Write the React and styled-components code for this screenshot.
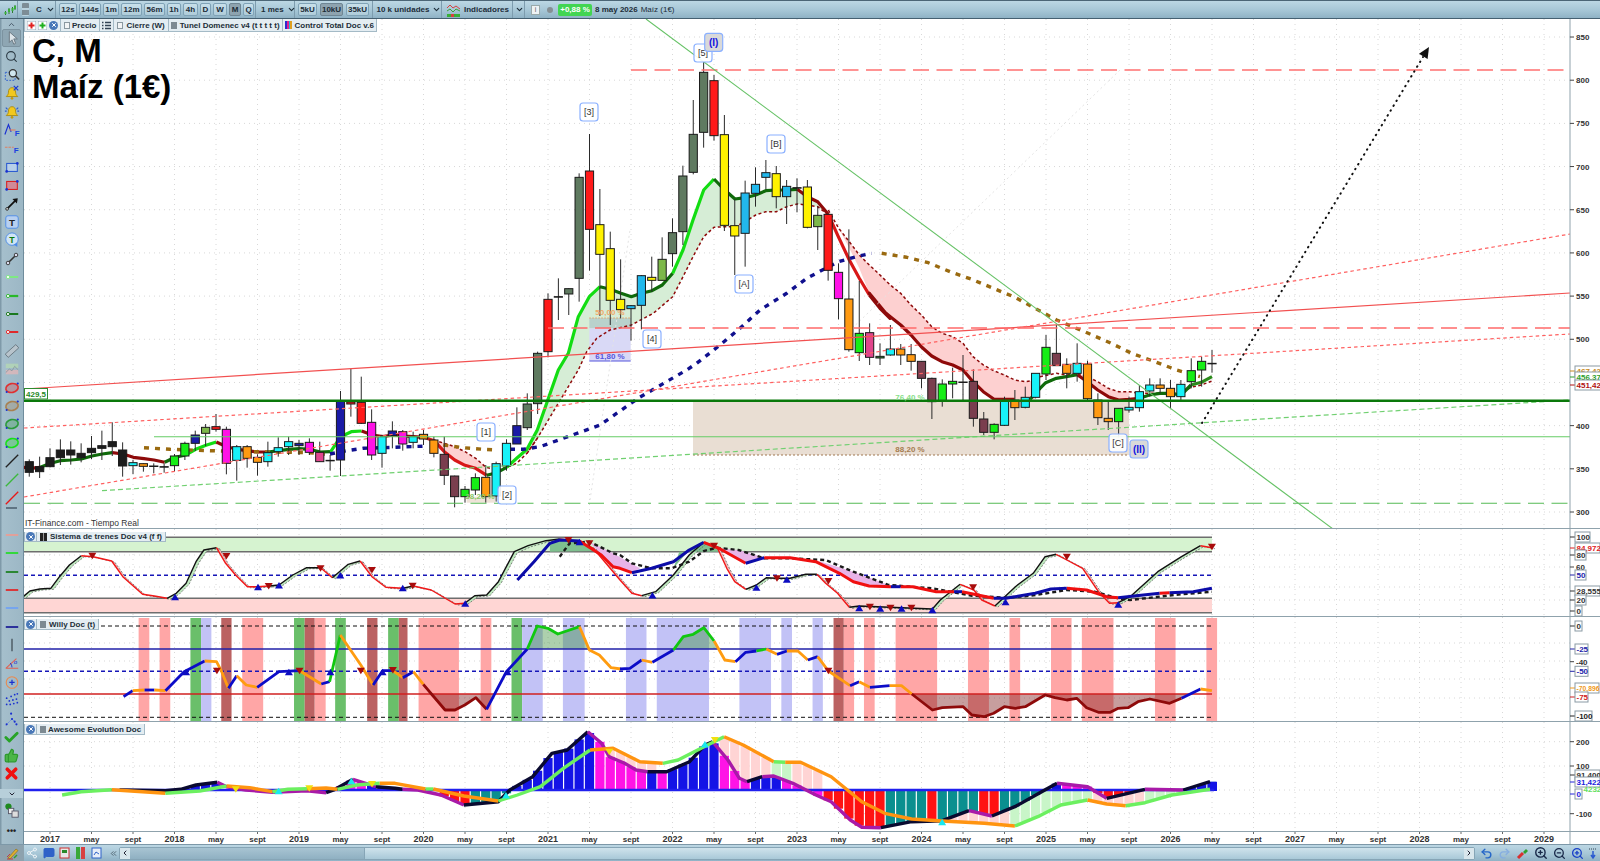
import React from 'react';
import styled, { createGlobalStyle } from 'styled-components';
import { Search, ZoomIn, ZoomOut, Undo2, Redo2, Share2, MessageSquare, ThumbsUp, Check, X, ChevronDown, ChevronUp, ChevronLeft, ChevronRight, ChevronsLeft } from 'lucide-react';

const GlobalStyle = createGlobalStyle`
  html, body { margin: 0; padding: 0; background: #fff; }
  body { font-family: "Liberation Sans", Arial, sans-serif; overflow: hidden; }
`;

const BAR_BG = 'linear-gradient(#bcd7e4, #a6c6d6 55%, #8fb2c5)';

const Page = styled.div`
  width: 1600px;
  height: 861px;
  display: flex;
  flex-direction: column;
  overflow: hidden;
  color: #1c2c38;
`;

/* ---- top toolbar ---- */
const TopBar = styled.div`
  height: 19px;
  flex: none;
  box-sizing: border-box;
  display: flex;
  background: ${BAR_BG};
  border-top: 1px solid #4c6676;
  border-bottom: 1px solid #456071;
`;
const Section = styled.div`
  width: ${(p) => p.$w}px;
  flex: none;
  box-sizing: border-box;
  display: flex;
  align-items: center;
  gap: ${(p) => p.$gap || 0}px;
  padding-left: ${(p) => p.$pad || 0}px;
  border-right: 1px solid #7d9cae;
`;
const Tail = styled(Section)`
  border: 0;
  width: auto;
`;
const BarButton = styled.div`
  width: ${(p) => p.$w}px;
  height: 13px;
  flex: none;
  box-sizing: border-box;
  display: flex;
  align-items: center;
  justify-content: center;
  font-size: 8px;
  font-weight: bold;
  border: 1px solid ${(p) => (p.$on ? '#6f8694' : '#7fa2b6')};
  border-radius: 2px;
  background: ${(p) => (p.$on ? '#8ea3af' : 'linear-gradient(#c9e0ea, #aecbd9)')};
`;
const BarText = styled.span`
  font-size: 8px;
  font-weight: ${(p) => (p.$light ? 'normal' : 'bold')};
  margin-left: ${(p) => p.$ml || 0}px;
  white-space: nowrap;
`;
const BarChevron = styled(ChevronDown)`
  margin-left: ${(p) => p.$ml || 0}px;
  flex: none;
`;
const Badge = styled.span`
  width: 34px;
  height: 12px;
  display: flex;
  align-items: center;
  justify-content: center;
  font-size: 8px;
  font-weight: bold;
  color: #fff;
  background: #42d552;
  border-radius: 2px;
`;
const InfoBox = styled.span`
  width: 7px;
  height: 8px;
  display: flex;
  align-items: center;
  justify-content: center;
  font-size: 7px;
  background: #eef3f5;
  color: #555;
  border: 1px solid #9aa;
  margin: 0 0 0 6px;
`;
const GrayDot = styled.span`
  width: 6px;
  height: 6px;
  border-radius: 50%;
  background: #858f94;
  margin: 0 5px 0 7px;
`;
const Grip = styled.div`
  width: 7px;
  height: 13px;
  margin: 0 7px 0 4px;
  background: repeating-linear-gradient(#7d8d96 0 5px, #b9d2de 5px 7px);
  border-radius: 1px;
`;

/* ---- left tool column ---- */
const Main = styled.div`
  height: 825px;
  flex: none;
  display: flex;
`;
const Sidebar = styled.div`
  width: 24px;
  flex: none;
  box-sizing: border-box;
  display: flex;
  flex-direction: column;
  align-items: stretch;
  background: linear-gradient(90deg, #7f9aa9 0 1px, #a5bfcc 2px, #9db8c6 21px);
  border-right: 1px solid #6f8c9c;
`;
const SideTop = styled.div`
  height: 10px;
  flex: none;
  display: flex;
  align-items: center;
  justify-content: center;
  color: #456;
`;
const ToolCell = styled.div`
  height: 18.4px;
  flex: none;
  display: flex;
  align-items: center;
  justify-content: center;
  box-sizing: border-box;
  ${(p) => p.$on && 'background: #8ea6b3; border: 1px solid #7c93a0; border-radius: 2px; margin: 0 2px;'}
`;
const SideGrip = styled.div`
  height: 2px;
  flex: none;
  margin: 0 6px 16.4px;
  background: #5f7483;
`;
const SideFooter = styled.div`
  margin-top: auto;
  display: flex;
  flex-direction: column;
`;
const SideFold = styled.div`
  height: 9px;
  display: flex;
  align-items: center;
  justify-content: center;
  background: #b7cfda;
  color: #223;
`;
const SideBottom = styled.div`
  height: 46px;
  display: flex;
  flex-direction: column;
  align-items: center;
  justify-content: space-around;
  padding-bottom: 4px;
  box-sizing: border-box;
`;
const SideDots = styled.div`
  font-size: 9px;
  line-height: 7px;
  font-weight: bold;
  color: #222;
`;

/* ---- chart ---- */
const ChartColumn = styled.div`
  position: relative;
  flex: 1;
  display: flex;
  flex-direction: column;
`;
const Pane = styled.div`
  position: relative;
  height: ${(p) => p.$h}px;
  flex: none;
  box-sizing: border-box;
  overflow: hidden;
  border-bottom: 1.5px solid #8fa2ac;
`;
const PlotSvg = styled.svg`
  display: block;
  width: 1576px;
  height: ${(p) => p.$h}px;
`;
const Title = styled.div`
  position: absolute;
  left: 8px;
  top: 14px;
  font-size: 33px;
  line-height: 36px;
  font-weight: bold;
  color: #000;
`;
const Source = styled.div`
  position: absolute;
  left: 1px;
  bottom: 0;
  font-size: 8.5px;
  line-height: 10px;
  color: #333;
`;
const LegendBar = styled.div`
  position: absolute;
  left: 0;
  top: ${(p) => p.$top || 0}px;
  height: ${(p) => p.$h || 12}px;
  box-sizing: border-box;
  display: flex;
  align-items: stretch;
  background: #e4edf2;
  border: 1px solid #a4bac6;
  border-top: 0;
  font-size: 8px;
  font-weight: bold;
  color: #222e38;
`;
const LegendCell = styled.div`
  display: flex;
  align-items: center;
  gap: ${(p) => p.$gap ?? 3}px;
  padding: 0 ${(p) => p.$pad ?? 3}px;
  border-right: 1px solid #a4bac6;
  white-space: nowrap;
  &:last-child { border-right: 0; }
`;
const Swatch = styled.span`
  width: 6px;
  height: 7px;
  box-sizing: border-box;
  background: ${(p) => p.$bg || '#7d8a92'};
  border: ${(p) => (p.$open ? '1px solid #8a98a0' : '0')};
`;
const Stripes = styled.span`
  width: 7px;
  height: 8px;
  background: ${(p) => p.$bg || 'linear-gradient(90deg, #2c2ccf 0 2px, #e02090 2px 4px, #25b8d8 4px 5px, #e0a020 5px 7px)'};
`;
const CloseDot = styled.span`
  width: 9px;
  height: 9px;
  flex: none;
  border-radius: 50%;
  background: #4a78b8;
  color: #fff;
  display: flex;
  align-items: center;
  justify-content: center;
`;
const AxisLabel = styled.text`
  font-family: "Liberation Sans", Arial, sans-serif;
  font-size: ${(p) => p.$size || 8}px;
  font-weight: bold;
  fill: ${(p) => p.$c || '#333'};
`;
const MarkLabel = styled.text`
  font-family: "Liberation Sans", Arial, sans-serif;
  font-size: ${(p) => p.$size || 8}px;
  font-weight: ${(p) => (p.$bold ? 'bold' : 'normal')};
  fill: ${(p) => p.$c || '#333'};
  text-anchor: middle;
`;
const TimeSvg = styled.svg`
  display: block;
  width: 1576px;
  height: 12px;
  flex: none;
`;

/* ---- bottom bar ---- */
const BottomBar = styled.div`
  height: 17px;
  flex: none;
  display: flex;
  align-items: center;
  background: ${BAR_BG};
  border-top: 1px solid #7d98a8;
  box-sizing: border-box;
`;
const PenCell = styled.div`
  width: 24px;
  height: 100%;
  flex: none;
  display: flex;
  align-items: center;
  justify-content: center;
  background: #8da2ae;
`;
const BottomIcons = styled.div`
  width: 86px;
  flex: none;
  display: flex;
  align-items: center;
  justify-content: space-around;
  padding-right: 6px;
  box-sizing: border-box;
`;
const FoldLeft = styled(ChevronsLeft)`
  flex: none;
  margin: 0 1px 0 -1px;
`;
const Scroller = styled.div`
  width: 1356px;
  height: 13px;
  flex: none;
  box-sizing: border-box;
  display: flex;
  align-items: stretch;
  background: linear-gradient(#cfe3ec, #a9c9d8);
  border: 1px solid #86a5b6;
  border-radius: 2px;
`;
const ScrollThumb = styled.div`
  width: 234px;
  background: linear-gradient(#a8c4d2, #8fb0c2);
  border-right: 1px solid #86a5b6;
`;
const ScrollEnd = styled.div`
  width: 10px;
  margin-left: ${(p) => (p.$right ? 'auto' : '0')};
  display: flex;
  align-items: center;
  justify-content: center;
  background: #d9e6ec;
  color: #223;
`;
const BottomTools = styled.div`
  flex: 1;
  display: flex;
  align-items: center;
  justify-content: space-around;
  padding-left: 2px;
`;

/* ---- coordinate helpers: values read off the reference at a known offset and scale ---- */
const conv = (ox, oy, sx = 3, sy = 3) => (pts) => pts.map(([x, y]) => [ox + x / sx, oy + y / sy]);
const z7 = conv(20, 380);
const z8 = conv(500, 30);
const z9 = conv(800, 200);
const z10 = conv(20, 525, 2.529);
const z11 = conv(620, 525, 2.529);
const z12 = conv(20, 720, 1.3067);

const monthX = (m) => 50 + 10.375 * m;
const toPath = (pts) => pts.map(([x, y]) => `${x.toFixed(1)},${y.toFixed(1)}`).join(' ');
const interp = (pts, x) => {
  if (x <= pts[0][0]) return pts[0][1];
  for (let i = 1; i < pts.length; i += 1) {
    if (x <= pts[i][0]) {
      const [x0, y0] = pts[i - 1];
      const [x1, y1] = pts[i];
      return y0 + ((y1 - y0) * (x - x0)) / (x1 - x0 || 1);
    }
  }
  return pts[pts.length - 1][1];
};

const COL = {
  k: '#1c1c1c', c: '#18f2f8', o: '#ff9a12', g: '#16ee16', n: '#1a1aa6', v: '#7db84a', r: '#ff1a1a',
  m: '#ff12e6', p: '#e0468c', w: '#7a3e4e', y: '#fff200', s: '#5f7a60', b: '#22b8ec', d: '#2c8a2c',
};

// [wick top, body top, body bottom, wick bottom, colour]; first candle is two months before 2017
const CANDLES_A = [
  [238, 245, 277, 290, 'k'], [230, 260, 275, 294, 'k'], [205, 233, 260, 262, 'k'], [178, 210, 233, 255, 'k'],
  [184, 210, 225, 254, 'k'], [190, 220, 233, 247, 'k'], [168, 205, 218, 237, 'k'], [152, 197, 205, 240, 'k'],
  [127, 185, 200, 228, 'k'], [187, 210, 258, 290, 'k'], [240, 248, 257, 282, 'c'], [250, 251, 259, 275, 'o'],
  [250, 258, 258, 280, 'k'], [250, 260, 261, 278, 'k'], [222, 228, 257, 274, 'g'], [185, 190, 228, 240, 'g'],
  [152, 165, 190, 213, 'n'], [132, 142, 160, 198, 'v'], [102, 140, 148, 155, 'r'], [140, 148, 250, 283, 'm'],
  [195, 200, 241, 302, 'c'], [195, 200, 235, 263, 'o'], [223, 232, 247, 287, 'o'], [185, 218, 245, 260, 'c'],
  [172, 203, 215, 230, 'c'], [170, 185, 200, 225, 'c'], [180, 190, 197, 225, 'n'], [175, 187, 217, 225, 'm'],
  [185, 217, 245, 245, 'p'], [225, 241, 241, 272, 'k'], [33, 62, 240, 288, 'n'], [-33, 66, 72, 110, 'r'],
  [-10, 67, 130, 132, 'r'], [88, 127, 225, 240, 'm'], [165, 170, 220, 263, 'c'], [124, 153, 167, 205, 'n'],
  [150, 155, 192, 212, 'm'], [155, 170, 187, 205, 'c'], [150, 163, 177, 195, 'o'], [170, 180, 220, 232, 'o'],
  [170, 223, 286, 315, 'w'], [287, 288, 350, 382, 'w'], [318, 328, 350, 368, 'g'], [280, 293, 330, 345, 'g'],
  [255, 292, 350, 368, 'o'], [245, 251, 348, 365, 'c'], [178, 190, 258, 272, 'c'], [82, 137, 192, 192, 'n'],
  [40, 72, 143, 150, 's'], [-85, -80, 71, 102, 's'],
];
const CANDLES_B = [
  [790, 808, 965, 982, 'r'], [745, 800, 800, 870, 'k'], [775, 776, 792, 855, 's'], [430, 442, 745, 815, 's'],
  [312, 423, 598, 722, 'r'], [477, 584, 673, 858, 'y'], [605, 656, 811, 885, 'y'], [688, 808, 839, 865, 'y'],
  [825, 827, 836, 932, 'b'], [735, 737, 826, 898, 'b'], [680, 742, 751, 785, 'y'], [622, 688, 751, 752, 'v'],
  [565, 608, 671, 710, 's'], [407, 438, 605, 645, 's'], [210, 313, 427, 433, 's'], [95, 127, 307, 353, 's'],
  [135, 152, 317, 332, 'r'], [255, 314, 586, 603, 'y'], [508, 587, 618, 735, 'y'], [452, 489, 610, 710, 'b'],
  [412, 463, 490, 530, 'b'], [390, 428, 442, 478, 'b'], [408, 431, 500, 535, 'y'], [450, 469, 500, 582, 'b'],
  [445, 473, 474, 547, 'k'], [450, 471, 592, 595, 'y'], [530, 556, 590, 660, 'v'],
];
const CANDLES_C = [
  [43, 43, 211, 242, 'r'], [190, 217, 296, 358, 'm'], [88, 297, 449, 455, 'o'], [243, 400, 458, 483, 'g'],
  [370, 398, 472, 495, 'p'], [430, 469, 474, 495, 'd'], [375, 447, 465, 467, 'c'], [432, 447, 465, 495, 'o'],
  [432, 464, 484, 512, 'o'], [484, 484, 535, 565, 'w'], [533, 535, 605, 657, 'w'], [538, 552, 602, 620, 'g'],
  [503, 544, 552, 595, 'g'], [465, 546, 547, 600, 'k'], [508, 544, 655, 680, 'w'], [636, 657, 697, 705, 'w'],
  [670, 673, 697, 718, 'g'], [590, 604, 676, 678, 'c'], [570, 600, 623, 660, 'o'], [560, 592, 622, 625, 'c'],
  [592, 520, 592, 595, 'c'], [405, 442, 522, 540, 'g'], [375, 460, 497, 497, 'w'], [475, 493, 520, 565, 'o'],
  [430, 490, 520, 545, 'c'], [482, 492, 596, 600, 'o'], [580, 600, 653, 675, 'o'], [605, 655, 665, 690, 'o'],
  [625, 625, 665, 712, 'g'], [590, 622, 630, 638, 'c'], [555, 575, 623, 635, 'c'], [535, 555, 573, 590, 'c'],
  [535, 555, 565, 580, 'o'], [540, 565, 590, 625, 'o'], [540, 553, 590, 600, 'c'], [475, 512, 545, 565, 'g'],
  [470, 484, 510, 560, 'g'], [450, 490, 491, 518, 'k'],
];
const scaleCandles = (list, oy, first) => list.map(([a, b, c, d, col], i) => ({
  x: monthX(first + i), wt: oy + a / 3, bt: oy + b / 3, bb: oy + c / 3, wb: oy + d / 3, col: COL[col],
}));
const CANDLES = [
  ...scaleCandles(CANDLES_A, 380, -2),
  ...scaleCandles(CANDLES_B, 30, 48),
  ...scaleCandles(CANDLES_C, 200, 75),
];

const DGREEN = '#0f6a0a';
const LGREEN = '#12dd12';
const DRED = '#8e0a0a';
const RED = '#d81818';

const MA_SEGMENTS = [
  [DRED, z7([[10, 262], [28, 265], [61, 262]])],
  [DGREEN, z7([[61, 262], [92, 250], [121, 242], [154, 240], [184, 237], [216, 228], [247, 222], [277, 218]])],
  [DRED, z7([[277, 218], [309, 222], [340, 232], [372, 236], [402, 240], [434, 247]])],
  [DGREEN, z7([[434, 247], [465, 232], [495, 226]])],
  [LGREEN, z7([[495, 226], [527, 208], [558, 196], [589, 186]])],
  [DRED, z7([[589, 186], [620, 200], [651, 208], [683, 212], [713, 216], [745, 216]])],
  [DGREEN, z7([[745, 216], [776, 212], [807, 208], [838, 206], [869, 208], [901, 216], [932, 215]])],
  [LGREEN, z7([[932, 215], [962, 170], [994, 155], [1025, 153]])],
  [DRED, z7([[1025, 153], [1057, 165], [1088, 170], [1118, 165], [1150, 168], [1180, 170], [1212, 172]])],
  [RED, z7([[1212, 172], [1242, 182], [1273, 215], [1304, 240], [1335, 256], [1367, 265], [1400, 286]])],
  [DGREEN, z7([[1400, 286], [1430, 278], [1460, 262]])],
  [LGREEN, [...z7([[1460, 262], [1490, 235], [1521, 208], [1552, 150]]), ...z8([[175, 1020], [205, 970], [235, 860], [268, 800], [300, 770]])]],
  [DGREEN, z8([[300, 770], [331, 778], [363, 790], [394, 800], [424, 790], [456, 782], [487, 765], [518, 730]])],
  [LGREEN, z8([[518, 730], [549, 660], [579, 570], [611, 480], [642, 447]])],
  [DGREEN, z8([[642, 447], [674, 480], [705, 507], [735, 503], [767, 495], [797, 482], [829, 480], [860, 480], [892, 478]])],
  [DRED, z8([[892, 478], [922, 500], [953, 515], [985, 553]])],
  [RED, z8([[985, 553], [1015, 620], [1048, 690], [1078, 745], [1108, 795]])],
  [DRED, [...z8([[1108, 795], [1140, 835], [1170, 865]]), ...z9([[208, 280], [240, 325], [271, 350], [302, 375], [333, 405], [364, 440], [395, 468], [426, 485], [458, 495], [489, 510], [519, 545], [550, 575], [581, 597], [613, 598], [644, 598]])]],
  [DGREEN, z9([[690, 598], [720, 565], [737, 548], [769, 535], [799, 530], [832, 524]])],
  [DRED, z9([[832, 524], [862, 545], [893, 570], [925, 590], [956, 600], [988, 598], [1019, 595]])],
  [DGREEN, z9([[1019, 595], [1048, 585], [1080, 580], [1111, 580], [1143, 585], [1173, 555]])],
  ['#2c8a1c', z9([[1173, 555], [1204, 547], [1236, 530]])],
];

const UPPER_B = z7([[1242, 180], [1273, 190], [1304, 200], [1335, 215], [1367, 235], [1398, 262], [1430, 270], [1460, 262], [1490, 250], [1521, 220], [1552, 175]]);
const LOWER_A = [...UPPER_B.slice(-2), ...z8([[235, 1020], [260, 965], [290, 925], [330, 900], [394, 885], [460, 850], [518, 800], [549, 740], [579, 680], [611, 620], [642, 592], [674, 590], [705, 590], [735, 575], [767, 555], [797, 545], [829, 545], [860, 530], [892, 522], [922, 525], [953, 530], [985, 555]])];
const UPPER_C = z9([[85, 30], [116, 85], [148, 125], [178, 165], [208, 195], [240, 225], [271, 255], [302, 280], [333, 315], [364, 345], [395, 380], [426, 400], [458, 410], [489, 430], [519, 470], [550, 495], [581, 512], [613, 525], [644, 540], [676, 545], [707, 540]]);
const UPPER_D = z9([[720, 530], [769, 520], [799, 525], [832, 520], [862, 530], [893, 545], [925, 565], [956, 575], [988, 575], [1019, 580], [1143, 580], [1173, 562], [1204, 555], [1236, 543]]);

const CLOUDS = [
  ['#d6edd6', [...z7([[1521, 208], [1552, 150]]), ...z8([[175, 1020], [205, 970], [235, 860], [268, 800], [300, 770], [331, 778], [363, 790], [394, 800], [424, 790], [456, 782], [487, 765], [518, 730], [549, 660], [579, 570], [611, 480], [642, 447], [674, 480], [705, 507], [735, 503], [767, 495], [797, 482], [829, 480], [860, 480], [892, 478], [922, 500], [953, 515], [985, 553]]), ...[...LOWER_A].reverse()]],
  ['#fdd0d0', [...z9([[85, 30], [116, 85], [148, 145], [178, 205], [208, 280], [240, 325], [271, 350], [302, 375], [333, 405], [364, 440], [395, 468], [426, 485], [458, 495], [489, 510], [519, 545], [550, 575], [581, 597], [644, 598], [707, 598]]), ...[...UPPER_C].reverse()]],
  ['#fdd0d0', [...z9([[832, 524], [862, 545], [893, 570], [925, 590], [956, 600], [988, 598]]), ...z9([[988, 575], [956, 575], [925, 565], [893, 545], [862, 530], [832, 520]])]],
  ['#fdd0d0', [...z7([[1242, 182], [1273, 215], [1304, 240], [1335, 256], [1367, 265], [1400, 286]]), ...z7([[1398, 262], [1367, 235], [1335, 215], [1304, 200], [1273, 190], [1242, 180]])]],
];

const NAVY = '#10108e';
const BROWN = '#9a6a10';
const LONG_MA = [
  [BROWN, z7([[372, 203], [450, 208], [570, 212], [700, 215], [870, 218], [925, 224]])],
  [NAVY, z7([[930, 222], [980, 212], [1030, 205], [1120, 202], [1225, 198]])],
  [BROWN, z7([[1270, 195], [1330, 203], [1390, 208], [1430, 210]])],
  [NAVY, [...z7([[1470, 208], [1510, 208], [1560, 200]]), [600, 425], [640, 397], ...z8([[560, 1020], [590, 1000], [660, 945], [720, 895], [780, 840], [860, 790], [920, 745], [1015, 695]]), ...z9([[180, 167], [215, 160]])]],
  [BROWN, z9([[245, 160], [320, 172], [385, 188], [450, 215], [515, 238], [580, 265], [645, 292], [705, 325], [770, 360], [865, 400], [930, 428], [995, 460], [1065, 485], [1130, 510], [1200, 530]])],
];

const WAVES = [
  ['[3]', 589, 112], ['[5]', 703, 53], ['[B]', 776, 144], ['[A]', 744, 284], ['[4]', 652, 339],
  ['[1]', 486, 432], ['[2]', 507, 495], ['[C]', 1118, 443],
];

const PRICES = [850, 800, 750, 700, 650, 600, 550, 500, 450, 400, 350, 300];
const priceY = (p) => 512 - (p - 300) * 0.8636;
const GRID_MONTHS = Array.from({ length: 37 }, (_, i) => i * 4);

const Grid = ({ top, bottom, rows }) => (
  <g stroke="#d8d8d8" strokeWidth="1" strokeDasharray="1 4">
    {GRID_MONTHS.map((m) => <line key={m} x1={monthX(m)} x2={monthX(m)} y1={top} y2={bottom} />)}
    {rows.map((y) => <line key={y} x1={24} x2={1570} y1={y} y2={y} />)}
  </g>
);

const Lines = ({ segments, width, ...rest }) => (
  <g fill="none" strokeWidth={width} strokeLinejoin="round" {...rest}>
    {segments.map(([c, pts], i) => <polyline key={i} stroke={c} points={toPath(pts)} />)}
  </g>
);

const Axis = ({ ticks, boxes = [] }) => (
  <g>
    <line x1={1570} x2={1570} y1={0} y2={861} stroke="#8fa2ac" strokeWidth="1" />
    {ticks.map(([label, y]) => (
      <g key={label}>
        <line x1={1570} x2={1574} y1={y} y2={y} stroke="#444" />
        <AxisLabel x={1576} y={y + 3}>{label}</AxisLabel>
      </g>
    ))}
    {boxes.map(([label, y, c, w = 14, size]) => (
      <g key={`${label}${y}`}>
        <line x1={1570} x2={1575} y1={y} y2={y} stroke={c} />
        <rect x={1575} y={y - 5} width={w} height={10} fill="#fff" stroke="#8a9aa4" />
        <AxisLabel x={1576.5} y={y + 3} $c={c} $size={size}>{label}</AxisLabel>
      </g>
    ))}
  </g>
);

const Tri = ({ x, y, down, c }) => (
  <polygon
    fill={c}
    points={down
      ? `${x - 4},${y - 3} ${x + 4},${y - 3} ${x},${y + 3.5}`
      : `${x - 4},${y + 3.5} ${x + 4},${y + 3.5} ${x},${y - 3}`}
  />
);
const Tris = ({ pts, down, c }) => pts.map(([x, y]) => <Tri key={`${x}${y}`} x={x} y={y} down={down} c={c} />);

const PricePlot = () => (
  <PlotSvg viewBox="24 19 1576 510" $h={510}>
    <Grid top={19} bottom={529} rows={PRICES.map(priceY)} />

    {CLOUDS.map(([c, pts], i) => <polygon key={i} fill={c} points={toPath(pts)} />)}

    <rect x={589.3} y={318} width={41.4} height={10.3} fill="#b9d2cc" />
    <rect x={589.3} y={328.3} width={41.4} height={32.7} fill="#d9d9f6" />
    <line x1={589.3} x2={630.7} y1={318} y2={318} stroke="#e8a060" strokeDasharray="1.5 1.5" />
    <line x1={589.3} x2={630.7} y1={361} y2={361} stroke="#5555dd" />
    <rect x={693} y={401.7} width={436} height={53.3} fill="#e9ded3" />
    <line x1={693} x2={1129} y1={455} y2={455} stroke="#a07850" strokeDasharray="2 2" />
    <rect x={466.7} y={496.7} width={28.3} height={6} fill="#efe3d8" />

    <Lines segments={[[DRED, LOWER_A], [DRED, UPPER_C], [DRED, UPPER_D], [DRED, UPPER_B]]} width={1.5} strokeDasharray="3 2.5" />
    <Lines segments={MA_SEGMENTS} width={3.2} />
    <Lines segments={LONG_MA} width={3.4} strokeDasharray="5 6" />

    <line x1={1120} y1={70} x2={840} y2={340} stroke="#e4e4e4" strokeDasharray="2 3" />
    <line x1={590} y1={500} x2={630} y2={230} stroke="#e4e4e4" strokeDasharray="2 3" />

    {CANDLES.map((c) => (
      <g key={c.x}>
        <line x1={c.x} x2={c.x} y1={c.wt} y2={c.wb} stroke="#2a2a2a" strokeWidth="1" />
        <rect x={c.x - 4.1} y={c.bt} width={8.2} height={Math.max(c.bb - c.bt, 0.5)} fill={c.col} stroke="#1a1a1a" strokeWidth="1" />
      </g>
    ))}

    <line x1={24} y1={389} x2={1570} y2={293} stroke="#f25050" strokeWidth="1.2" />
    <line x1={24} y1={497} x2={1570} y2={234} stroke="#ff6060" strokeWidth="1.2" strokeDasharray="3.5 3" />
    <line x1={24} y1={428} x2={1570} y2={334} stroke="#ff6060" strokeWidth="1.2" strokeDasharray="3.5 3" />
    <line x1={631} y1={70} x2={1570} y2={70} stroke="#ff7070" strokeWidth="1.6" strokeDasharray="16 7.5" />
    <line x1={548} y1={328} x2={1570} y2={328} stroke="#ff6a6a" strokeWidth="1.4" strokeDasharray="16 7.5" />
    <line x1={102} y1={490.7} x2={1570} y2={400} stroke="#70d070" strokeWidth="1.2" strokeDasharray="5 3" />
    <line x1={154} y1={436.7} x2={1570} y2={436.7} stroke="#66cc66" strokeWidth="1.1" />
    <line x1={24} y1={503.3} x2={1570} y2={503.3} stroke="#55bb55" strokeWidth="1.1" strokeDasharray="16 7.5" />
    <line x1={646} y1={19} x2={1333} y2={529} stroke="#66c266" strokeWidth="1.1" />
    <line x1={24} y1={400.7} x2={1570} y2={400.7} stroke="#0a780a" strokeWidth="2.4" />

    <line x1={1202} y1={423} x2={1423} y2={57} stroke="#111" strokeWidth="2" strokeLinecap="round" strokeDasharray="0.5 5.2" />
    <polygon points="1429,47 1427.6,59 1419,53.8" fill="#111" />

    <MarkLabel x={610} y={315} $c="#f0a868" $bold>50,00 %</MarkLabel>
    <MarkLabel x={610} y={359} $c="#5555dd" $bold>61,80 %</MarkLabel>
    <MarkLabel x={910} y={399.5} $c="#88e088" $bold>76,40 %</MarkLabel>
    <MarkLabel x={910} y={452} $c="#a57c50" $bold>88,20 %</MarkLabel>
    <MarkLabel x={480} y={499} $c="#88c868" $bold>38,20 %</MarkLabel>

    {WAVES.map(([t, x, y]) => (
      <g key={t}>
        <rect x={x - 9} y={y - 9} width={18} height={18} rx={3} fill="#fff" fillOpacity="0.9" stroke="#8ab0ff" strokeWidth="1.2" />
        <MarkLabel x={x} y={y + 3} $size={9}>{t}</MarkLabel>
      </g>
    ))}
    {[['(I)', 713.7, 42.3], ['(II)', 1139, 449]].map(([t, x, y]) => (
      <g key={t}>
        <rect x={x - 9} y={y - 9} width={18} height={18} rx={3} fill="#d9d9d9" stroke="#8ab0ff" strokeWidth="1.2" />
        <MarkLabel x={x} y={y + 3.5} $size={10} $c="#1414e0" $bold>{t}</MarkLabel>
      </g>
    ))}

    <rect x={24.5} y={388.5} width={23} height={10.5} fill="#fff" stroke="#2e8b2e" />
    <AxisLabel x={26} y={396.5} $c="#1f8a1f">429,5</AxisLabel>

    <Axis
      ticks={PRICES.filter((p) => p !== 450).map((p) => [p, priceY(p)])}
      boxes={[['467,42', 371, '#c88a20', 26], ['456,37', 377, '#2da02d', 26], ['451,42', 385, '#b01010', 26]]}
    />
  </PlotSvg>
);

const FAST = [
  ['#111', z10([[8, 215], [25, 198], [50, 192], [78, 190], [100, 155], [125, 120], [155, 92]])],
  ['#f01818', z10([[155, 92], [185, 95], [232, 108], [260, 155], [310, 208], [340, 213], [372, 220]])],
  ['#111', z10([[372, 220], [395, 205], [420, 175], [445, 110], [465, 75], [497, 68]])],
  ['#f01818', z10([[497, 68], [520, 115], [545, 150], [575, 185], [600, 185], [630, 183]])],
  ['#111', z10([[630, 183], [655, 180], [690, 150], [725, 128], [760, 128]])],
  ['#f01818', z10([[760, 128], [790, 158]])],
  ['#111', z10([[790, 158], [830, 118], [860, 108]])],
  ['#f01818', z10([[860, 108], [890, 155], [925, 187], [968, 190]])],
  ['#111', z10([[968, 190], [995, 183]])],
  ['#f01818', z10([[995, 183], [1040, 195], [1100, 237], [1125, 235]])],
  ['#111', z10([[1125, 235], [1150, 212], [1180, 210], [1210, 170], [1250, 80], [1285, 62], [1330, 47], [1365, 42]])],
  ['#f01818', [...z10([[1365, 42], [1415, 50], [1450, 70], [1500, 140]]), ...z11([[0, 165], [30, 205], [55, 212]])]],
  ['#111', z11([[55, 212], [90, 200], [135, 150], [175, 90], [212, 52]])],
  ['#f01818', z11([[212, 52], [245, 65], [270, 130], [290, 170], [318, 193]])],
  ['#111', z11([[318, 193], [345, 180], [370, 158], [395, 160], [430, 160], [470, 148], [498, 148]])],
  ['#f01818', z11([[498, 148], [520, 175], [550, 205], [580, 247]])],
  ['#111', z11([[580, 247], [605, 243], [790, 252], [810, 225], [860, 178]])],
  ['#f01818', z11([[860, 178], [895, 195], [915, 225], [948, 243]])],
  ['#111', z11([[948, 243], [1000, 185], [1045, 145], [1075, 95], [1103, 88]])],
  ['#f01818', z11([[1103, 88], [1130, 105], [1170, 130], [1210, 200], [1238, 235], [1260, 233]])],
  ['#111', z11([[1260, 233], [1290, 215], [1360, 140], [1420, 95], [1468, 62]])],
  ['#f01818', z11([[1468, 62], [1497, 68]])],
];
const shift = (pts) => pts.map(([x, y]) => [x + 3, y + 1]);

const SIGNAL = [...z10([[1365, 95], [1390, 55], [1440, 50], [1500, 85]]), ...z11([[0, 90], [30, 115], [80, 130], [130, 130], [175, 110], [212, 78], [245, 68], [300, 75], [365, 100], [430, 100], [520, 105], [590, 140], [680, 180], [790, 190], [890, 212], [975, 218], [1040, 212], [1130, 195], [1200, 200], [1260, 220], [1290, 225], [1400, 210], [1497, 200]])];
const SLOW_BLUE = '#0c0ca8';
const SLOW = [
  [SLOW_BLUE, z10([[1258, 165], [1300, 110], [1340, 55], [1365, 45], [1415, 48]])],
  ['#f01010', [...z10([[1415, 48], [1470, 90], [1500, 125]]), ...z11([[0, 130], [30, 143]])]],
  [SLOW_BLUE, z11([[30, 143], [80, 130], [135, 110], [175, 75], [212, 52]])],
  ['#f01010', z11([[212, 52], [250, 70], [318, 115]])],
  [SLOW_BLUE, z11([[318, 115], [365, 98]])],
  ['#f01010', z11([[365, 98], [430, 98], [495, 110], [555, 145], [590, 170], [630, 183], [685, 185]])],
  [SLOW_BLUE, z11([[685, 185], [710, 185]])],
  ['#f01010', z11([[710, 185], [740, 185], [800, 200], [845, 200]])],
  [SLOW_BLUE, z11([[845, 200], [865, 200]])],
  ['#f01010', z11([[865, 200], [945, 220]])],
  [SLOW_BLUE, z11([[945, 220], [975, 220], [1050, 205], [1090, 192], [1130, 190]])],
  ['#f01010', z11([[1130, 190], [1180, 195], [1230, 215], [1260, 218]])],
  [SLOW_BLUE, z11([[1260, 218], [1300, 213], [1365, 205]])],
  ['#f01010', z11([[1365, 205], [1390, 203]])],
  [SLOW_BLUE, z11([[1390, 203], [1450, 200], [1497, 190]])],
];
const OSC_FILLS = [
  ['#7fc08f', [...z10([[1340, 55], [1365, 45], [1415, 48], [1450, 78]]), ...z10([[1450, 78], [1340, 80]])]],
  ['#e8b4e8', [...z10([[1440, 50], [1500, 85], [1568, 130]]), ...z11([[30, 143]]), ...z10([[1500, 125], [1470, 90]])]],
  ['#7fc08f', z11([[135, 130], [175, 75], [212, 52], [245, 65], [250, 80], [150, 80]])],
  ['#e8b4e8', z11([[250, 70], [300, 75], [365, 98], [318, 115]])],
  ['#e8b4e8', z11([[495, 105], [590, 140], [680, 180], [630, 183], [590, 170], [555, 145]])],
  ['#e8b4e8', z11([[865, 205], [975, 218], [945, 220]])],
  ['#e8b4e8', z11([[1180, 195], [1200, 200], [1260, 218], [1230, 215]])],
];

const OscPlot = () => (
  <PlotSvg viewBox="24 529 1576 88" $h={88}>
    <Grid top={529} bottom={617} rows={[555, 567, 587, 600]} />
    <rect x={24} y={537.3} width={1188} height={14.4} fill="#d6f3d0" />
    <rect x={24} y={598.3} width={1188} height={14.4} fill="#ffd6d4" />
    {[537.3, 551.7, 598.3, 612.7].map((y) => <line key={y} x1={24} x2={1212} y1={y} y2={y} stroke="#6e6e6e" strokeWidth="1.6" />)}
    <line x1={24} x2={1212} y1={575.3} y2={575.3} stroke="#1616b8" strokeWidth="1.5" strokeDasharray="4 3" />
    {FAST.map(([c, pts], i) => (
      <polygon key={i} fill={c === '#111' ? '#bfe9bf' : '#f6bcbc'} points={toPath([...pts, ...[...shift(pts)].reverse()])} />
    ))}
    {OSC_FILLS.map(([c, pts], i) => <polygon key={i} fill={c} points={toPath(pts)} />)}
    <Lines segments={FAST.map(([, pts]) => ['#555', shift(pts)])} width={0.7} strokeDasharray="2 1.5" />
    <Lines segments={FAST} width={1.4} />
    <polyline fill="none" stroke="#1a1a1a" strokeWidth="2.4" strokeDasharray="4 3" points={toPath(SIGNAL)} />
    <Lines segments={SLOW} width={3} />
    <Tris c="#a80c0c" down pts={[...z10([[183, 92], [522, 93], [629, 183], [760, 130], [890, 135], [993, 182], [1387, 45], [1440, 55]]), ...z11([[238, 62], [397, 160], [527, 168], [632, 245], [684, 248], [737, 248], [893, 187], [1130, 95], [1497, 65]])]} />
    <Tris c="#0c0cc0" pts={[...z10([[392, 215], [602, 185], [655, 180], [810, 150], [968, 188], [1126, 235], [1415, 50]]), ...z11([[82, 210], [345, 187], [422, 163], [605, 248], [658, 250], [712, 250], [790, 254], [975, 230], [1260, 238]])]} />
    <Axis
      ticks={[[60, 567]]}
      boxes={[[100, 537, '#333', 15], ['84,972', 548, '#e02020', 25], [80, 555, '#333', 11], [50, 575, '#2222aa', 11], ['28,555', 591, '#333', 25], [20, 600, '#333', 11], [0, 611, '#333', 7]]}
    />
  </PlotSvg>
);

const W_RED = '#ffa6a6';
const W_GREEN = '#6abf6a';
const W_LAV = '#c2c2f6';
const W_MAROON = '#bb6262';
const WILLY_BARS = [
  ...[[300, 327], [353, 380], [562, 615], [745, 773], [1008, 1110], [1165, 1192]].map((b) => [W_RED, b, 10]),
  ...[[431, 458], [693, 720], [797, 824], [931, 958], [1243, 1270]].map((b) => [W_GREEN, b, 10]),
  ...[[458, 484], [1270, 1322], [1373, 1428]].map((b) => [W_LAV, b, 10]),
  ...[[509, 535], [720, 745], [878, 904], [958, 980]].map((b) => [W_MAROON, b, 10]),
  ...[[15, 67], [93, 225], [302, 382], [408, 435], [487, 513]].map((b) => [W_LAV, b, 11]),
  [W_MAROON, [540, 566], 11],
  ...[[566, 592], [617, 644], [697, 802], [880, 933], [985, 1012], [1090, 1142], [1168, 1248], [1353, 1405], [1483, 1510]].map((b) => [W_RED, b, 11]),
];
const WO = '#ff9c10';
const WB = '#0c0cc8';
const WG = '#10c810';
const WR = '#8e0a0a';
const WILLY = [
  [WB, z10([[262, 515], [285, 497]])], [WO, z10([[285, 497], [315, 495]])], [WB, z10([[315, 495], [340, 495]])],
  [WO, z10([[340, 495], [368, 497]])], [WB, z10([[368, 497], [415, 440], [467, 408]])],
  [WO, z10([[467, 408], [497, 410], [510, 440], [527, 490]])], [WB, z10([[527, 490], [548, 452]])],
  [WO, z10([[548, 452], [572, 480], [600, 487]])], [WB, z10([[600, 487], [655, 440], [707, 437]])],
  [WO, z10([[707, 437], [762, 477]])], [WB, z10([[762, 477], [783, 470]])], [WG, z10([[783, 470], [810, 330]])],
  [WO, z10([[810, 330], [862, 420], [893, 480]])], [WB, z10([[893, 480], [917, 437], [943, 437]])],
  [WO, z10([[943, 437], [968, 458]])], [WB, z10([[968, 458], [995, 440]])], [WO, z10([[995, 440], [1020, 478]])],
  [WR, z10([[1020, 478], [1075, 555], [1100, 555], [1125, 540], [1153, 518], [1180, 553]])],
  [WB, z10([[1180, 553], [1230, 440], [1283, 372]])],
  [WG, z10([[1283, 372], [1308, 303], [1335, 310], [1360, 327], [1415, 305]])],
  [WO, z10([[1415, 305], [1440, 375], [1465, 390], [1495, 428], [1520, 432]])],
  [WB, z11([[0, 432], [25, 430], [55, 405]])], [WO, z11([[55, 405], [82, 412]])],
  [WB, z11([[82, 412], [135, 375]])], [WG, z11([[135, 375], [160, 335], [185, 328], [212, 308], [238, 348]])],
  [WO, z11([[238, 348], [265, 405], [292, 410]])], [WB, z11([[292, 410], [318, 382], [345, 378]])],
  [WG, z11([[345, 378], [370, 372]])], [WO, z11([[370, 372], [397, 388]])], [WB, z11([[397, 388], [422, 378]])],
  [WO, z11([[422, 378], [450, 378], [475, 405]])], [WB, z11([[475, 405], [500, 395]])],
  [WO, z11([[500, 395], [527, 438], [582, 482]])], [WB, z11([[582, 482], [605, 470]])], [WO, z11([[605, 470], [632, 487]])],
  [WB, z11([[632, 487], [682, 482]])], [WO, z11([[682, 482], [712, 482], [738, 507]])],
  [WR, z11([[738, 507], [790, 555], [815, 548], [868, 545], [890, 570], [920, 575], [945, 565], [972, 545], [1000, 550], [1025, 545], [1075, 510], [1100, 518], [1130, 525], [1155, 520], [1180, 548], [1210, 562], [1240, 562], [1260, 550], [1285, 548], [1310, 530], [1340, 522], [1390, 535], [1420, 520]])],
  [WB, z11([[1420, 520], [1468, 492]])], [WO, z11([[1468, 492], [1497, 497]])],
];
const WILLY_FILLS = [
  ['#3c8f3c', z10([[1283, 372], [1308, 303], [1335, 310], [1360, 327], [1415, 305], [1440, 372]])],
  ['#3c8f3c', z11([[135, 372], [160, 335], [185, 328], [212, 308], [238, 348], [250, 372]])],
  ['#7a1818', z10([[1035, 507], [1075, 555], [1100, 555], [1125, 540], [1153, 518], [1180, 553], [1200, 507]])],
  ['#7a1818', z11([[738, 507], [790, 555], [815, 548], [868, 545], [890, 570], [920, 575], [945, 565], [972, 545], [1000, 550], [1025, 545], [1075, 510], [1100, 518], [1130, 525], [1155, 520], [1180, 548], [1210, 562], [1240, 562], [1260, 550], [1285, 548], [1310, 530], [1340, 522], [1390, 535], [1420, 520], [1435, 507]])],
];

const WillyPlot = () => (
  <PlotSvg viewBox="24 617 1576 105" $h={105}>
    <Grid top={617} bottom={722} rows={[643, 661, 679, 698]} />
    {WILLY_BARS.map(([c, [a, b], src]) => {
      const map = src === 10 ? z10 : z11;
      const [[x1], [x2]] = map([[a, 0], [b, 0]]);
      return <rect key={`${src}${a}`} x={x1} y={618} width={x2 - x1} height={104} fill={c} />;
    })}
    {WILLY_FILLS.map(([c, pts], i) => <polygon key={i} fill={c} fillOpacity="0.42" points={toPath(pts)} />)}
    <line x1={24} x2={1212} y1={626} y2={626} stroke="#111" strokeWidth="1" strokeDasharray="4 3" />
    <line x1={24} x2={1212} y1={717.3} y2={717.3} stroke="#111" strokeWidth="1" strokeDasharray="4 3" />
    <line x1={24} x2={1212} y1={649} y2={649} stroke="#2020a8" strokeWidth="1.6" />
    <line x1={24} x2={1212} y1={671.3} y2={671.3} stroke="#1616b8" strokeWidth="1.5" strokeDasharray="4 3" />
    <line x1={24} x2={1212} y1={694} y2={694} stroke="#d02020" strokeWidth="1.6" />
    <Lines segments={WILLY} width={2.8} />
    <Tris c="#0c0cc0" pts={z10([[420, 440], [680, 440], [785, 440], [917, 440], [1233, 440]])} />
    <Tris c="#a80c0c" down pts={[...z10([[498, 437], [707, 437], [862, 437], [943, 435]]), ...z11([[527, 437]])]} />
    <Axis
      ticks={[[-40, 661.7]]}
      boxes={[[0, 626, '#333', 7], [-25, 649, '#2222aa', 13], [-50, 671.3, '#2222aa', 13], ['-70,896', 688, '#f09a20', 24, 6.8], [-75, 697, '#d02020', 13], [-100, 716, '#222', 17]]}
    />
  </PlotSvg>
);

const AW_FAST = [
  ['#0a0a30', z12([[130, 210], [190, 212], [210, 208], [230, 195], [258, 187]])],
  ['#a81aa8', z12([[258, 187], [270, 200], [295, 210], [330, 217], [375, 212], [400, 218]])],
  ['#0a0a30', z12([[400, 218], [410, 210], [435, 178]])],
  ['#a81aa8', z12([[435, 178], [465, 200]])],
  ['#0a0a30', z12([[465, 200], [490, 205], [500, 208]])],
  ['#a81aa8', z12([[500, 208], [520, 210], [550, 225], [580, 255]])],
  ['#0a0a30', z12([[580, 255], [625, 245], [640, 210], [670, 170], [695, 100], [715, 90], [742, 35]])],
  ['#a81aa8', z12([[742, 35], [760, 70], [770, 110], [790, 130], [805, 150], [820, 155]])],
  ['#0a0a30', z12([[820, 155], [845, 155], [875, 125], [895, 75], [905, 65]])],
  ['#a81aa8', z12([[905, 65], [925, 120], [940, 175], [950, 185]])],
  ['#0a0a30', z12([[950, 185], [970, 170]])],
  ['#a81aa8', z12([[970, 170], [985, 168], [1010, 190], [1040, 225], [1060, 245], [1085, 300], [1100, 322], [1125, 323]])],
  ['#0a0a30', z12([[1125, 323], [1165, 305], [1205, 302], [1240, 272]])],
  ['#a81aa8', z12([[1240, 272], [1270, 288]])],
  ['#0a0a30', z12([[1270, 288], [1300, 260], [1335, 215], [1355, 190]])],
  ['#a81aa8', z12([[1355, 190], [1395, 200], [1420, 235]])],
  ['#0a0a30', z12([[1420, 235], [1470, 208]])],
  ['#a81aa8', z12([[1470, 208], [1520, 210]])],
  ['#0a0a30', z12([[1520, 210], [1555, 185]])],
];
const GR = '#6cf060';
const OR = '#ff9410';
const AW_SLOW = [
  [GR, z12([[55, 225], [80, 215], [120, 209]])], [OR, z12([[120, 209], [190, 220]])],
  [GR, z12([[190, 220], [235, 213], [270, 198]])], [OR, z12([[270, 198], [300, 203], [330, 215]])],
  [GR, z12([[330, 215], [350, 208], [375, 206]])], [OR, z12([[375, 206], [400, 204], [415, 208]])],
  [GR, z12([[415, 208], [440, 195], [470, 190]])], [OR, z12([[470, 190], [490, 190], [530, 207]])],
  [GR, z12([[530, 207], [540, 207]])], [OR, z12([[540, 207], [580, 228], [625, 243]])],
  [GR, z12([[625, 243], [650, 225], [680, 200], [710, 145], [745, 90]])], [OR, z12([[745, 90], [775, 85], [810, 125], [840, 130]])],
  [GR, z12([[840, 130], [860, 120], [890, 85], [920, 50]])], [OR, z12([[920, 50], [945, 75], [985, 125]])],
  [GR, z12([[985, 125], [1000, 127]])],
  [OR, z12([[1000, 127], [1020, 127], [1060, 170], [1100, 245], [1130, 280], [1165, 297], [1205, 303], [1260, 310], [1300, 318]])],
  [GR, z12([[1300, 318], [1330, 290], [1360, 255], [1395, 240]])], [OR, z12([[1395, 240], [1420, 252], [1445, 257]])],
  [GR, z12([[1445, 257], [1470, 248], [1505, 225], [1555, 208]])],
];
const AW_BLUE = '#1414e6';
const AW_MAG = '#ff14e6';
const AW_RED = '#ff1212';
const AW_TEAL = '#0a8f8f';
const BAR_RANGES = [
  [11, 16, AW_BLUE], [28, 30, AW_MAG], [31, 33, AW_BLUE], [38, 40, AW_RED], [41, 44, AW_TEAL], [45, 52, AW_BLUE],
  [53, 57, AW_MAG], [58, 58, AW_BLUE], [59, 59, AW_MAG], [60, 64, AW_BLUE], [65, 67, AW_MAG], [68, 70, AW_BLUE],
  [71, 74, AW_MAG], [75, 80, AW_RED], [81, 84, AW_TEAL], [85, 85, AW_RED], [86, 89, AW_TEAL], [90, 91, AW_RED],
  [92, 95, AW_TEAL], [96, 97, AW_BLUE], [98, 100, AW_MAG], [101, 104, AW_RED], [105, 105, AW_TEAL], [106, 112, AW_BLUE],
];
const PALE_RANGES = [
  [54, 58, '#ffd4d4'], [65, 69, '#ffd4d4'], [70, 71, '#c8f5c8'], [72, 74, '#ffd4d4'],
  [86, 92, '#ffd4d4'], [93, 100, '#c8f5c8'], [101, 105, '#ffd4d4'], [106, 112, '#c8f5c8'],
];
const AW_ZERO = 790;
const fastPts = AW_FAST.flatMap(([, pts]) => pts);
const slowPts = AW_SLOW.flatMap(([, pts]) => pts);
const rangeMonths = (ranges) => ranges.flatMap(([a, b, c]) => Array.from({ length: b - a + 1 }, (_, i) => [a + i, c]));

const AwesomePlot = () => (
  <PlotSvg viewBox="24 722 1576 110" $h={110}>
    <Grid top={722} bottom={832} rows={[741.7, 766, 790, 813.7]} />
    {rangeMonths(PALE_RANGES).map(([m, c]) => {
      const x = monthX(m);
      const a = interp(fastPts, x);
      const b = interp(slowPts, x);
      return <rect key={m} x={x - 4.6} y={Math.min(a, b)} width={9.2} height={Math.abs(a - b)} fill={c} />;
    })}
    {rangeMonths(BAR_RANGES).map(([m, c]) => {
      const x = monthX(m);
      const v = interp(fastPts, x);
      return <rect key={m} x={x - 4.6} y={Math.min(v, AW_ZERO)} width={9.2} height={Math.abs(v - AW_ZERO)} fill={c} />;
    })}
    <rect x={1208} y={782} width={9} height={9} fill={AW_BLUE} />
    <line x1={24} x2={1214} y1={AW_ZERO} y2={AW_ZERO} stroke="#2020ee" strokeWidth="2.4" />
    <Lines segments={AW_FAST} width={3.4} />
    <Lines segments={AW_SLOW} width={3.4} />
    <Tris c="#18e8f0" pts={z12([[338, 212], [433, 182], [635, 225], [895, 72], [1205, 305]])} />
    <Tris c="#f0e010" down pts={z12([[282, 208], [378, 205], [460, 192], [770, 95], [908, 60]])} />
    <Axis
      ticks={[[200, 741.7], [100, 766], [-100, 813.7]]}
      boxes={[['91,400', 775, '#333', 25], ['31,422', 782, '#2222dd', 25], [0, 794, '#2222dd', 7]]}
    />
    <AxisLabel x={1583.5} y={792} $c="#66e060">4232</AxisLabel>
  </PlotSvg>
);

const MONTH_LABELS = ['', 'may', 'sept'];
const TimeAxis = () => (
  <TimeSvg viewBox="24 832 1576 12">
    <line x1={1570} x2={1570} y1={832} y2={844} stroke="#8fa2ac" />
    {GRID_MONTHS.map((m) => {
      const isYear = m % 12 === 0;
      return (
        <g key={m}>
          <line x1={monthX(m)} x2={monthX(m)} y1={832} y2={834} stroke="#666" />
          <MarkLabel x={monthX(m)} y={842} $bold $size={isYear ? 9 : 8}>
            {isYear ? 2017 + m / 12 : MONTH_LABELS[(m % 12) / 4]}
          </MarkLabel>
        </g>
      );
    })}
  </TimeSvg>
);

/* ---- small tool icons ---- */
const Ic = ({ children, s = 16 }) => <svg width={s} height={s} viewBox="0 0 18 18" fill="none">{children}</svg>;
const Bell = ({ rays }) => (
  <Ic>
    <path d="M9 3c3 0 4 2.5 4 5s1 3.5 2.5 5h-13C4 11.5 5 10.5 5 8s1-5 4-5z" fill="#f2c81e" stroke="#a88a10" />
    <circle cx="9" cy="15" r="1.5" fill="#c49a10" />
    {rays
      ? <path d="M2 4l2 2M16 4l-2 2M1 8h2M17 8h-2" stroke="#2a5ad0" strokeWidth="1.2" />
      : <path d="M11 1l5 5M16 1l-5 5" stroke="#1a3ad0" strokeWidth="1.4" />}
  </Ic>
);
const Knob = ({ c, w = 2 }) => (
  <Ic>
    <circle cx="4.5" cy="9" r="1.8" fill="#fff" stroke={c} />
    <line x1="6.5" x2="16" y1="9" y2="9" stroke={c} strokeWidth={w} />
  </Ic>
);
const Ellipse = ({ c }) => (
  <Ic>
    <ellipse cx="9" cy="9" rx="7" ry="5" fill={`${c}44`} stroke={c} strokeWidth="1.8" transform="rotate(-12 9 9)" />
    <circle cx="3" cy="13.5" r="1.2" fill="#1a30d0" />
    <circle cx="15.5" cy="4" r="1.2" fill="#1a30d0" />
  </Ic>
);
const Diag = ({ c }) => <Ic><line x1="2" y1="16" x2="16" y2="2" stroke={c} strokeWidth="1.5" /></Ic>;
const Dash = ({ c }) => <Ic><line x1="2" x2="16" y1="9" y2="9" stroke={c} strokeWidth="1.8" /></Ic>;
const Rect = ({ stroke, fill }) => (
  <Ic>
    <rect x="3" y="5" width="12" height="9" fill={fill} stroke={stroke} strokeWidth="1.2" />
    <circle cx="3" cy="14" r="1.5" fill="#1a30d0" />
    <circle cx="15" cy="5" r="1.5" fill="#1a30d0" />
  </Ic>
);

const TOOLS = [
  <Ic key="a"><path d="M6 2v12l3-3 2 5 2-1-2-5h4z" fill="#dfe6ea" stroke="#64727c" /></Ic>,
  <Search key="b" size={13} color="#2b3a44" strokeWidth={2} />,
  <Ic key="c"><rect x="1.5" y="6" width="11" height="9" stroke="#2a5ad0" strokeDasharray="2 1.5" /><circle cx="10" cy="7" r="4" fill="#cfe6ee" stroke="#333" strokeWidth="1.4" /><line x1="13" y1="10" x2="17" y2="14" stroke="#333" strokeWidth="1.8" /></Ic>,
  <Bell key="d" />,
  <Bell key="e" rays />,
  <Ic key="f"><path d="M1 14L5 3l3 8" stroke="#1a30d0" strokeWidth="1.3" /><line x1="6" x2="13" y1="9" y2="9" stroke="#e08060" strokeWidth="1.3" /><text x="12" y="16" fontSize="9" fontWeight="bold" fontFamily="Liberation Sans" fill="#1a40e0">F</text></Ic>,
  <Ic key="g"><path d="M1 7h10" stroke="#e08060" strokeWidth="1.3" strokeDasharray="3 1" /><text x="11" y="13" fontSize="9" fontWeight="bold" fontFamily="Liberation Sans" fill="#1a40e0">F</text></Ic>,
  <Rect key="h" stroke="#2a5ad0" fill="#b8cfe8" />,
  <Rect key="i" stroke="#d82020" fill="#d08a98" />,
  <Ic key="j"><path d="M4 14L13 5" stroke="#111" strokeWidth="2" /><path d="M15.5 2.5l-1 6-5-5z" fill="#111" /><circle cx="3.5" cy="14.5" r="1.5" fill="#fff" stroke="#111" /></Ic>,
  <Ic key="k"><rect x="2" y="2" width="14" height="14" rx="2.5" fill="#b8d0f0" stroke="#4a8ae8" /><text x="9" y="13" textAnchor="middle" fontSize="11" fontWeight="bold" fontFamily="Liberation Sans" fill="#222">T</text></Ic>,
  <Ic key="l"><circle cx="9" cy="8" r="7" fill="#cfe4f4" stroke="#4a8ae8" /><path d="M11 14l4 3v-5z" fill="#4a8ae8" /><text x="9" y="12" textAnchor="middle" fontSize="10" fontWeight="bold" fontFamily="Liberation Sans" fill="#0a7a0a">T</text></Ic>,
  <Ic key="m"><line x1="5" y1="13" x2="13" y2="5" stroke="#333" strokeWidth="1.8" /><circle cx="4.5" cy="13.5" r="2" fill="#dde" stroke="#333" /><circle cx="13.5" cy="4.5" r="2" fill="#dde" stroke="#333" /></Ic>,
  <Knob key="n" c="#7af07a" />,
  <Knob key="o" c="#28b828" w={2.5} />,
  <Knob key="p" c="#0a700a" />,
  <Knob key="q" c="#e81818" />,
  <Ic key="r"><rect x="1" y="6.5" width="16" height="5" transform="rotate(-42 9 9)" fill="#b8c4cc" stroke="#6b7a84" /></Ic>,
  <Ic key="s"><rect x="2" y="3" width="14" height="5" fill="#b6dcb0" opacity="0.7" /><rect x="2" y="10" width="14" height="5" fill="#e8b6b6" opacity="0.7" /><path d="M2 13l4-4 3 2 3-5 4 4" stroke="#8a98a0" /></Ic>,
  <Ellipse key="t" c="#e03030" />,
  <Ellipse key="u" c="#a88050" />,
  <Ellipse key="v" c="#2a9a3a" />,
  <Ellipse key="w" c="#18e018" />,
  <Diag key="x" c="#222" />,
  <Diag key="y" c="#3cb83c" />,
  <Diag key="z" c="#e81818" />,
];
const TOOLS_LOWER = [
  <Dash key="a" c="#f29a8e" />,
  <Dash key="b" c="#18e018" />,
  <Dash key="c" c="#0f7a0f" />,
  <Dash key="d" c="#e81818" />,
  <Dash key="e" c="#6ca0f8" />,
  <Dash key="f" c="#101090" />,
  <Ic key="g"><line x1="9" x2="9" y1="2" y2="16" stroke="#5c6c76" strokeWidth="2" /></Ic>,
  <Ic key="h"><path d="M2 15L14 4M2 15h14" stroke="#e06050" strokeWidth="1.2" /><path d="M9 14a7 7 0 0 0-2-5" stroke="#1a30d0" /><text x="11" y="10" fontSize="7" fontFamily="Liberation Sans" fill="#1a30d0">o</text></Ic>,
  <Ic key="i"><circle cx="9" cy="9.5" r="6.5" stroke="#e88a50" strokeWidth="1.2" /><path d="M6 9.5h6M9 6.5v6" stroke="#1a30d0" strokeWidth="1.4" /></Ic>,
  <Ic key="j">{[[3, 14], [6, 10], [3, 7], [8, 5], [12, 3], [15, 2], [10, 9], [14, 8], [7, 14], [11, 13], [15, 12]].map(([x, y]) => <circle key={`${x}${y}`} cx={x} cy={y} r="1" fill="#1a30d0" />)}</Ic>,
  <Ic key="k"><path d="M2 16l7-7 3 3" stroke="#4a78e8" strokeDasharray="1.5 1.5" />{[[3, 15], [9, 9], [12, 12], [8, 3], [14, 15]].map(([x, y]) => <circle key={`${x}${y}`} cx={x} cy={y} r="1.2" fill="#1a30d0" />)}</Ic>,
  <Check key="l" size={17} color="#27a327" strokeWidth={4} />,
  <ThumbsUp key="m" size={15} color="#2e9a2e" fill="#4cb648" />,
  <X key="n" size={17} color="#f01010" strokeWidth={5} />,
];

const TIMEFRAMES = [['12s', 18], ['144s', 22], ['1m', 16], ['12m', 21], ['56m', 21], ['1h', 14], ['4h', 15], ['D', 11], ['W', 14], ['M', 12, true], ['Q', 11]];
const UNITS = [['5kU', 19], ['10kU', 23, true], ['35kU', 23]];
const TREND_ICON_BG = 'linear-gradient(90deg,#222 0 3px,#999 3px 4px,#222 4px)';

const App = () => (
  <Page>
    <GlobalStyle />
    <TopBar>
      <Section $w={18} $pad={4}>
        <svg width="12" height="12" viewBox="0 0 12 12">
          <path d="M1.5 7v4M5 4v6M8.500 3v6M11 1v5" stroke="#2f7a2f" />
          <path d="M1.5 8v2M5 5v3M8.500 4v3M11 2v3" stroke="#38b038" strokeWidth="2" />
        </svg>
      </Section>
      <Section $w={38}>
        <Grip />
        <BarText>C</BarText>
        <BarChevron size={9} strokeWidth={3} $ml={4} />
      </Section>
      <Section $w={200} $pad={3} $gap={2}>
        {TIMEFRAMES.map(([t, w, on]) => <BarButton key={t} $w={w} $on={on}>{t}</BarButton>)}
      </Section>
      <Section $w={39} $pad={5} $gap={3}>
        <BarText>1 mes</BarText>
        <BarChevron size={9} strokeWidth={3} />
      </Section>
      <Section $w={77.5} $pad={3} $gap={3}>
        {UNITS.map(([t, w, on]) => <BarButton key={t} $w={w} $on={on}>{t}</BarButton>)}
      </Section>
      <Section $w={69.5} $pad={4} $gap={3}>
        <BarText>10 k unidades</BarText>
        <BarChevron size={9} strokeWidth={3} />
      </Section>
      <Section $w={71} $pad={5} $gap={4}>
        <svg width="13" height="14" viewBox="0 0 13 14" fill="none">
          <path d="M0 5l3-3 3 3 3-2 4 3" stroke="#d84040" />
          <path d="M0 8l3-2 3 3 3-3 4 2" stroke="#3aa03a" />
          <rect x="0" y="11" width="13" height="3" fill="#38b038" />
          <rect x="4" y="11" width="3" height="3" fill="#d84040" />
        </svg>
        <BarText>Indicadores</BarText>
      </Section>
      <Section $w={12} $pad={2}>
        <BarChevron size={9} strokeWidth={3} />
      </Section>
      <Tail>
        <InfoBox>i</InfoBox>
        <GrayDot />
        <Badge>+0,88 %</Badge>
        <BarText $ml={3}>8 may 2026</BarText>
        <BarText $light $ml={3}>Maíz (1€)</BarText>
      </Tail>
    </TopBar>

    <Main>
      <Sidebar>
        <SideTop><ChevronUp size={9} strokeWidth={2.5} /></SideTop>
        {TOOLS.map((icon, i) => <ToolCell key={icon.key} $on={i === 0}>{icon}</ToolCell>)}
        <SideGrip />
        {TOOLS_LOWER.map((icon) => <ToolCell key={icon.key}>{icon}</ToolCell>)}
        <SideFooter>
          <SideFold><ChevronDown size={8} strokeWidth={3} /></SideFold>
          <SideBottom>
            <Ic>
              <circle cx="5" cy="4" r="3.5" fill="#1e8a1e" />
              <rect x="5" y="6" width="6" height="6" fill="#eee" stroke="#556" />
              <rect x="9" y="9" width="7" height="7" fill="#ddd" stroke="#556" />
            </Ic>
            <SideDots>•••</SideDots>
          </SideBottom>
        </SideFooter>
      </Sidebar>

      <ChartColumn>
        <Pane $h={510}>
          <PricePlot />
          <Title>C, M<br />Maíz (1€)</Title>
          <Source>IT-Finance.com - Tiempo Real</Source>
        </Pane>
        <Pane $h={88}>
          <OscPlot />
          <LegendBar $top={3} $h={10}>
            <LegendCell $pad={1}><CloseDot><X size={6} strokeWidth={4} /></CloseDot></LegendCell>
            <LegendCell><Stripes $bg={TREND_ICON_BG} />Sistema de trenes Doc v4 (f f)</LegendCell>
          </LegendBar>
        </Pane>
        <Pane $h={105}>
          <WillyPlot />
          <LegendBar $top={2} $h={11}>
            <LegendCell $pad={1}><CloseDot><X size={6} strokeWidth={4} /></CloseDot></LegendCell>
            <LegendCell><Swatch />Willy Doc (t)</LegendCell>
          </LegendBar>
        </Pane>
        <Pane $h={110}>
          <AwesomePlot />
          <LegendBar $top={2} $h={11}>
            <LegendCell $pad={1}><CloseDot><X size={6} strokeWidth={4} /></CloseDot></LegendCell>
            <LegendCell $gap={2}><Swatch />Awesome Evolution Doc</LegendCell>
          </LegendBar>
        </Pane>
        <TimeAxis />

        <LegendBar $h={13}>
          <LegendCell $pad={2} $gap={2}>
            <svg width="9" height="9" viewBox="0 0 9 9"><rect width="9" height="9" fill="#fff" stroke="#9ab" /><path d="M4.5 1.5v6M1.5 4.5h6" stroke="#e02020" strokeWidth="2" /></svg>
            <svg width="9" height="9" viewBox="0 0 9 9"><rect width="9" height="9" fill="#fff" stroke="#9ab" /><path d="M4.5 1.5v6M1.5 4.5h6" stroke="#20b020" strokeWidth="2" /></svg>
            <CloseDot><X size={6} strokeWidth={4} /></CloseDot>
          </LegendCell>
          <LegendCell $gap={2}><Swatch $bg="#f2f4f5" $open />Precio</LegendCell>
          <LegendCell $pad={2}>
            <svg width="9" height="9" viewBox="0 0 9 9"><path d="M0 1.5h1.5M3 1.5h6M0 4.500h1.5M3 4.500h6M0 7.500h1.5M3 7.500h6" stroke="#345" strokeWidth="1.3" /></svg>
          </LegendCell>
          <LegendCell><Swatch $bg="#f2f4f5" $open />Cierre (W)</LegendCell>
          <LegendCell $pad={2}><Swatch />Tunel Domenec v4 (t t t t t)</LegendCell>
          <LegendCell $pad={2}><Stripes />Control Total Doc v.6</LegendCell>
        </LegendBar>
      </ChartColumn>
    </Main>

    <BottomBar>
      <PenCell>
        <svg width="13" height="13" viewBox="0 0 13 13" fill="none">
          <path d="M2 11L10 2l2 1.500L4 12z" fill="#e0b030" stroke="#8a6a10" strokeWidth="0.6" />
          <path d="M1 10l3-3M1 12h6" stroke="#c04040" />
          <path d="M8 11l3-3" stroke="#30a030" strokeWidth="1.4" />
        </svg>
      </PenCell>
      <BottomIcons>
        <Share2 size={12} color="#eef4f7" />
        <MessageSquare size={12} color="#2f62c8" fill="#2f62c8" />
        <svg width="11" height="12" viewBox="0 0 11 12"><rect x="1" y="1" width="9" height="10" fill="#e8e8e8" stroke="#c33" /><rect x="3" y="3" width="5" height="3" fill="#2a8a2a" /></svg>
        <svg width="11" height="12" viewBox="0 0 11 12"><rect x="1" width="4" height="12" fill="#38a838" /><rect x="6" width="4" height="12" fill="#d84040" /></svg>
        <svg width="11" height="12" viewBox="0 0 11 12"><rect x="1" y="1" width="9" height="10" fill="#e8eef8" stroke="#2f62c8" /><path d="M3 8l2-3 3 2" stroke="#2f62c8" fill="none" /></svg>
      </BottomIcons>
      <FoldLeft size={9} color="#3a4a56" strokeWidth={2} />
      <Scroller>
        <ScrollEnd><ChevronLeft size={8} strokeWidth={3} /></ScrollEnd>
        <ScrollThumb />
        <ScrollEnd $right><ChevronRight size={8} strokeWidth={3} /></ScrollEnd>
      </Scroller>
      <BottomTools>
        <Undo2 size={13} color="#2566c8" strokeWidth={2.6} />
        <Redo2 size={13} color="#86aee0" strokeWidth={2.6} />
        <svg width="13" height="13" viewBox="0 0 13 13"><path d="M2 11L7 6" stroke="#d83030" strokeWidth="3" /><path d="M7 5l3-3 2 2-3 3z" fill="#30a030" /></svg>
        <ZoomIn size={14} color="#1a2a4a" strokeWidth={2.4} />
        <ZoomOut size={13} color="#1a2a4a" strokeWidth={2.4} />
        <ZoomIn size={13} color="#1a40c8" strokeWidth={2.4} />
        <svg width="8" height="13" viewBox="0 0 8 13"><path d="M0 2h8" stroke="#345" strokeDasharray="1 1" /><path d="M4 4v6M2 8l2 3 2-3" stroke="#2a5ad0" fill="none" strokeWidth="1.5" /></svg>
      </BottomTools>
    </BottomBar>
  </Page>
);

export default App;
